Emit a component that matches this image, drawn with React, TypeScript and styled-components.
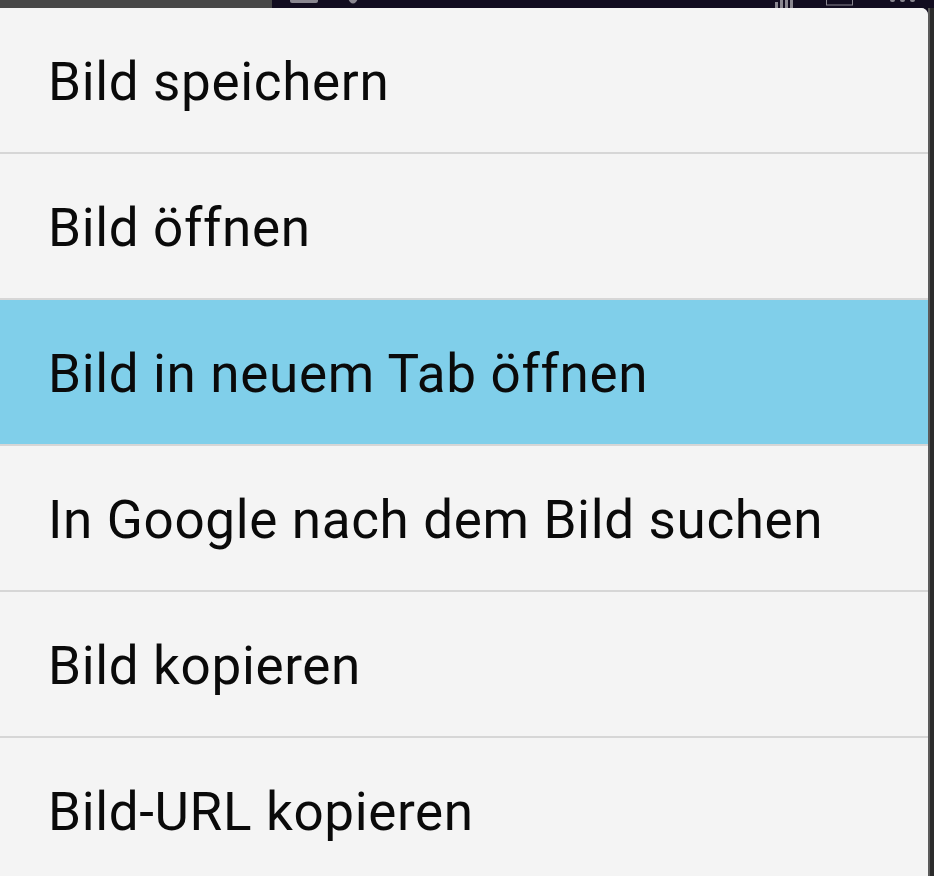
import React from "react";
import styled, { createGlobalStyle } from "styled-components";

const Global = createGlobalStyle`
  html, body { margin: 0; padding: 0; background: #120d20; overflow: hidden; }
  body { width: 934px; height: 876px; }
`;

const Screen = styled.div`
  display: flex;
  flex-direction: column;
  width: 934px;
  height: 876px;
  overflow: hidden;
`;

const StatusBar = styled.div`
  display: flex;
  height: 8px;
  flex: none;
`;

const StatusLeft = styled.div`
  width: 272px;
  background: #474747;
`;

const StatusRight = styled.div`
  flex: 1;
  background: #120d20;
  display: flex;
`;

const Body = styled.div`
  display: flex;
  flex: 1;
  min-height: 0;
`;

const Menu = styled.ul`
  list-style: none;
  margin: 0;
  padding: 0;
  width: 928px;
  background: #f4f4f4;
  border-top-right-radius: 7px;
  overflow: hidden;
  display: flex;
  flex-direction: column;
`;

const Item = styled.li<{ $active?: boolean }>`
  flex: none;
  box-sizing: border-box;
  height: 144px;
  display: flex;
  align-items: center;
  padding: 4px 0 0 48px;
  background: ${(p) => (p.$active ? "#80cfea" : "#f4f4f4")};
  font-family: Roboto, "Liberation Sans", sans-serif;
  font-size: 53px;
  letter-spacing: 0.65px;
  color: #0a0a0a;
  & + & {
    height: 146px;
    border-top: 2px solid #d6d6d6;
  }
`;

const RightEdge = styled.div`
  width: 6px;
  background: linear-gradient(to right, #5a5a5a 0 2px, #2b2b2b 2px);
`;

const items = [
  "Bild speichern",
  "Bild öffnen",
  "Bild in neuem Tab öffnen",
  "In Google nach dem Bild suchen",
  "Bild kopieren",
  "Bild-URL kopieren",
];

export default function App() {
  return (
    <>
      <Global />
      <Screen>
        <StatusBar>
          <StatusLeft />
          <StatusRight>
            <svg width="662" height="8" viewBox="0 0 662 8">
              <rect x="18" y="-4" width="28" height="7" rx="2" fill="#8a8790" />
              <path d="M74 -4 h14 l-4 6 q-3 3 -6 0 z" fill="#8a8790" />
              <rect x="503" y="2" width="3" height="6" fill="#8a8790" />
              <rect x="508" y="0" width="3" height="8" fill="#8a8790" />
              <rect x="513" y="0" width="3" height="8" fill="#8a8790" />
              <rect x="518" y="0" width="3" height="8" fill="#8a8790" />
              <rect x="554.5" y="-4" width="26" height="9" fill="none" stroke="#8a8790" strokeWidth="1" />
              <rect x="618" y="-2" width="5" height="4" rx="2" fill="#8a8790" />
              <rect x="628" y="-2" width="5" height="4" rx="2" fill="#8a8790" />
              <rect x="638" y="-2" width="5" height="4" rx="2" fill="#8a8790" />
            </svg>
          </StatusRight>
        </StatusBar>
        <Body>
          <Menu>
            {items.map((t, i) => (
              <Item key={t} $active={i === 2}>
                {t}
              </Item>
            ))}
          </Menu>
          <RightEdge />
        </Body>
      </Screen>
    </>
  );
}
